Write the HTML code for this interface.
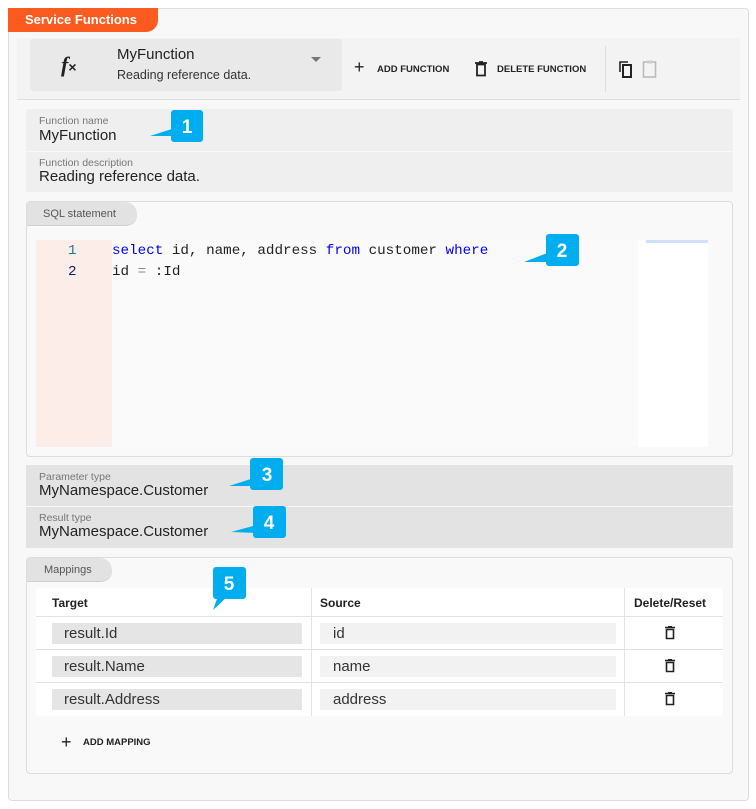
<!DOCTYPE html>
<html><head><style>
*{box-sizing:border-box;margin:0;padding:0}
body{width:756px;height:809px;background:#fff;font-family:"Liberation Sans",Roboto,sans-serif;position:relative;overflow:hidden;color:#222}
.a{position:absolute}
.mono{font-family:"Liberation Mono",monospace}
.lbl{font-size:10.5px;color:#777}
.val{font-size:15px;color:#222}
.tab{background:#e2e2e2;font-size:11px;color:#555;border-top-right-radius:12px;border-bottom-right-radius:12px 10px;padding:6px 0 0 16px;border-bottom:1px solid #d0d0d0}
.hd{font-size:12px;font-weight:bold;color:#222}
.inp{background:#e5e5e5;font-size:15px;color:#333;padding:2px 0 0 12px;height:21px}
.inp2{background:#f2f2f2;font-size:15px;color:#333;padding:2px 0 0 13px;height:21px}
.hl{height:1px;background:#e3e3e3}
</style></head><body>
<div class="a" style="left:8px;top:8px;width:741px;height:793px;border:1px solid #ddd;border-radius:4px;background:#f8f8f8"></div>
<div class="a" style="left:8px;top:8px;width:150px;height:24px;background:#fb5b1f;border-bottom-right-radius:12px;color:#fff;font-weight:bold;font-size:13px;padding:4px 0 0 17px">Service Functions</div>
<div class="a" style="left:17px;top:38px;width:723px;height:62px;background:#f3f3f3;border-bottom:1px solid #ddd"></div>
<div class="a" style="left:30px;top:39px;width:312px;height:52px;background:#e9e9e9;border-radius:3px"></div>
<div class="a" style="left:61px;top:52px;font-size:22px;font-family:'Liberation Serif',serif;font-style:italic;font-weight:bold">f<span style="font-size:14px;font-style:normal;font-family:'Liberation Sans'">×</span></div>
<div class="a" style="left:117px;top:46px;font-size:15px;color:#222">MyFunction</div>
<div class="a" style="left:117px;top:68px;font-size:12.5px;color:#333">Reading reference data.</div>
<div class="a" style="left:311px;top:57px;width:0;height:0;border-left:5px solid transparent;border-right:5px solid transparent;border-top:5px solid #777"></div>
<div class="a" style="left:354px;top:58px;font-size:18px;line-height:18px">+</div>
<div class="a" style="left:377px;top:64px;font-size:9.5px;font-weight:bold;color:#222">ADD FUNCTION</div>
<svg class="a" style="left:474px;top:61px" width="14" height="16" viewBox="0 0 14 16"><path d="M1 2h12M5 1h4M3 3.5h8v11H3z" fill="none" stroke="#222" stroke-width="1.8"/></svg>
<div class="a" style="left:497px;top:64px;font-size:9.5px;font-weight:bold;color:#222">DELETE FUNCTION</div>
<div class="a" style="left:605px;top:46px;width:1px;height:46px;background:#ddd"></div>
<svg class="a" style="left:618px;top:60px" width="18" height="20" viewBox="0 0 18 20"><path d="M2 12V2h8" fill="none" stroke="#222" stroke-width="1.6"/><rect x="5" y="5" width="8" height="12" fill="none" stroke="#222" stroke-width="2"/></svg>
<svg class="a" style="left:642px;top:59px" width="16" height="20" viewBox="0 0 16 20"><rect x="1.5" y="3" width="12" height="15" fill="none" stroke="#bbb" stroke-width="1.6"/><rect x="5" y="1.5" width="5" height="3" fill="#ccc"/></svg>
<div class="a" style="left:26px;top:109px;width:707px;height:42px;background:#efefef;border-radius:3px 3px 0 0"></div>
<div class="a lbl" style="left:39px;top:115px">Function name</div>
<div class="a val" style="left:39px;top:127px">MyFunction</div>
<div class="a" style="left:26px;top:152px;width:707px;height:40px;background:#efefef"></div>
<div class="a lbl" style="left:39px;top:157px">Function description</div>
<div class="a val" style="left:39px;top:168px">Reading reference data.</div>
<div class="a" style="left:26px;top:201px;width:707px;height:256px;border:1px solid #ddd;border-radius:4px;background:#f9f9f9"></div>
<div class="a tab" style="left:27px;top:202px;width:110px;height:24px">SQL statement</div>
<div class="a" style="left:36px;top:240px;width:76px;height:207px;background:#fdede8"></div>
<div class="a" style="left:112px;top:240px;width:526px;height:207px;background:#fafafa"></div>
<div class="a" style="left:638px;top:240px;width:70px;height:207px;background:#fff"></div>
<div class="a" style="left:646px;top:240px;width:62px;height:3px;background:#cfe0ff"></div>
<div class="a mono" style="left:68px;top:241px;font-size:14.25px;color:#237893;line-height:21px">1<br><span style="color:#0b216f">2</span></div>
<div class="a mono" style="left:112px;top:241px;font-size:14.25px;line-height:21px;white-space:pre;color:#222"><span style="color:#00f">select</span> id, name, address <span style="color:#00f">from</span> customer <span style="color:#00f">where</span>
id <span style="color:#888">=</span> :Id</div>
<div class="a" style="left:26px;top:465px;width:707px;height:41px;background:#e3e3e3"></div>
<div class="a lbl" style="left:39px;top:471px">Parameter type</div>
<div class="a val" style="left:39px;top:482px">MyNamespace.Customer</div>
<div class="a" style="left:26px;top:507px;width:707px;height:41px;background:#e3e3e3"></div>
<div class="a lbl" style="left:39px;top:512px">Result type</div>
<div class="a val" style="left:39px;top:523px">MyNamespace.Customer</div>
<div class="a" style="left:26px;top:557px;width:707px;height:217px;border:1px solid #ddd;border-radius:4px;background:#f9f9f9"></div>
<div class="a tab" style="left:27px;top:558px;width:85px;height:24px;padding-left:17px">Mappings</div>
<div class="a" style="left:36px;top:588px;width:687px;height:128px;background:#fff;border-radius:4px"></div>
<div class="a hd" style="left:52px;top:596px">Target</div>
<div class="a hd" style="left:320px;top:596px">Source</div>
<div class="a hd" style="left:634px;top:596px">Delete/Reset</div>
<div class="a" style="left:311px;top:588px;width:1px;height:128px;background:#e3e3e3"></div>
<div class="a" style="left:624px;top:588px;width:1px;height:128px;background:#e3e3e3"></div>
<div class="a hl" style="left:36px;top:616px;width:687px"></div>
<div class="a hl" style="left:36px;top:649px;width:687px"></div>
<div class="a hl" style="left:36px;top:682px;width:687px"></div>
<div class="a inp" style="left:52px;top:623px;width:250px">result.Id</div>
<div class="a inp" style="left:52px;top:656px;width:250px">result.Name</div>
<div class="a inp" style="left:52px;top:689px;width:250px">result.Address</div>
<div class="a inp2" style="left:320px;top:623px;width:296px">id</div>
<div class="a inp2" style="left:320px;top:656px;width:296px">name</div>
<div class="a inp2" style="left:320px;top:689px;width:296px">address</div>
<svg class="a" style="left:664px;top:626px" width="12" height="14" viewBox="0 0 12 14"><path d="M1 1.5h10M4 .8h4M2.5 3.5h7v9h-7z" fill="none" stroke="#222" stroke-width="1.6"/></svg>
<svg class="a" style="left:664px;top:659px" width="12" height="14" viewBox="0 0 12 14"><path d="M1 1.5h10M4 .8h4M2.5 3.5h7v9h-7z" fill="none" stroke="#222" stroke-width="1.6"/></svg>
<svg class="a" style="left:664px;top:692px" width="12" height="14" viewBox="0 0 12 14"><path d="M1 1.5h10M4 .8h4M2.5 3.5h7v9h-7z" fill="none" stroke="#222" stroke-width="1.6"/></svg>
<div class="a" style="left:61px;top:733px;font-size:18px;line-height:18px">+</div>
<div class="a" style="left:83px;top:737px;font-size:9.5px;font-weight:bold;color:#222">ADD MAPPING</div>
<svg class="a" style="left:0;top:0" width="756" height="809">
<g fill="#00aeef">
<path d="M150 136 L175 128 L175 136 Z"/><rect x="171" y="110" width="32" height="32" rx="3"/>
<path d="M524 262 L550 252 L550 262 Z"/><rect x="546" y="234" width="33" height="32" rx="3"/>
<path d="M229 486 L254 478 L254 486 Z"/><rect x="250" y="458" width="33" height="32" rx="3"/>
<path d="M231 532 L257 525 L257 533 Z"/><rect x="253" y="506" width="33" height="32" rx="3"/>
<path d="M213 610 L218 596 L228 596 Z"/><rect x="213" y="567" width="33" height="32" rx="3"/>
</g>
<g fill="#fff" font-family="Liberation Sans" font-weight="bold" font-size="19" text-anchor="middle">
<text x="187" y="133">1</text><text x="562" y="257">2</text><text x="267" y="481">3</text><text x="269" y="529">4</text><text x="229" y="590">5</text>
</g>
</svg>
</body></html>
